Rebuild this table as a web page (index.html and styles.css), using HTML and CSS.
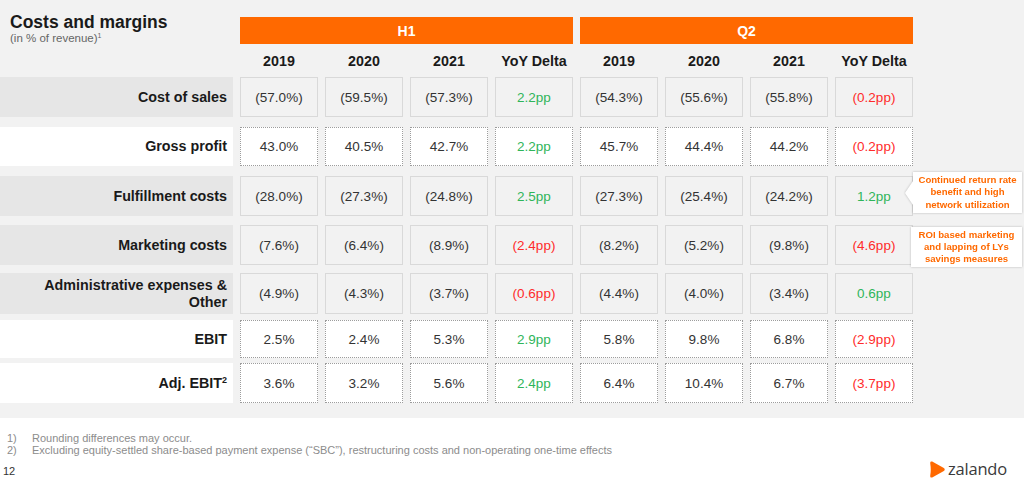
FILE: index.html
```html
<!DOCTYPE html>
<html lang="en">
<head>
<meta charset="utf-8">
<title>Costs and margins</title>
<link rel="stylesheet" href="styles.css">
</head>
<body>
<div class="slide">
  <div class="grid head">
    <div class="title-block">
      <div class="title">Costs and margins</div>
      <div class="subtitle">(in % of revenue)<sup>1</sup></div>
    </div>
    <div class="period p-h1">H1</div>
    <div class="period p-q2">Q2</div>
    <div class="year">2019</div>
    <div class="year">2020</div>
    <div class="year">2021</div>
    <div class="year">YoY Delta</div>
    <div class="year">2019</div>
    <div class="year">2020</div>
    <div class="year">2021</div>
    <div class="year">YoY Delta</div>
  </div>

  <div class="rows">
    <div class="grid row shaded">
      <div class="label"><span>Cost of sales</span></div>
      <div class="cell">(57.0%)</div><div class="cell">(59.5%)</div><div class="cell">(57.3%)</div><div class="cell pos">2.2pp</div>
      <div class="cell">(54.3%)</div><div class="cell">(55.6%)</div><div class="cell">(55.8%)</div><div class="cell neg">(0.2pp)</div>
    </div>
    <div class="grid row plain h39">
      <div class="label"><span>Gross profit</span></div>
      <div class="cell">43.0%</div><div class="cell">40.5%</div><div class="cell">42.7%</div><div class="cell pos">2.2pp</div>
      <div class="cell">45.7%</div><div class="cell">44.4%</div><div class="cell">44.2%</div><div class="cell neg">(0.2pp)</div>
    </div>
    <div class="grid row shaded">
      <div class="label"><span>Fulfillment costs</span></div>
      <div class="cell">(28.0%)</div><div class="cell">(27.3%)</div><div class="cell">(24.8%)</div><div class="cell pos">2.5pp</div>
      <div class="cell">(27.3%)</div><div class="cell">(25.4%)</div><div class="cell">(24.2%)</div><div class="cell pos">1.2pp</div>
      <div class="callout arrow"><div class="callout-box">Continued return rate benefit and high network utilization</div></div>
    </div>
    <div class="grid row shaded mt9">
      <div class="label"><span>Marketing costs</span></div>
      <div class="cell">(7.6%)</div><div class="cell">(6.4%)</div><div class="cell">(8.9%)</div><div class="cell neg">(2.4pp)</div>
      <div class="cell">(8.2%)</div><div class="cell">(5.2%)</div><div class="cell">(9.8%)</div><div class="cell neg">(4.6pp)</div>
      <div class="callout flat"><div class="callout-box">ROI based marketing and lapping of LYs savings measures</div></div>
    </div>
    <div class="grid row shaded mt8 h41">
      <div class="label"><span>Administrative expenses &amp;<br>Other</span></div>
      <div class="cell">(4.9%)</div><div class="cell">(4.3%)</div><div class="cell">(3.7%)</div><div class="cell neg">(0.6pp)</div>
      <div class="cell">(4.4%)</div><div class="cell">(4.0%)</div><div class="cell">(3.4%)</div><div class="cell pos">0.6pp</div>
    </div>
    <div class="grid row plain mt6 h38">
      <div class="label"><span>EBIT</span></div>
      <div class="cell">2.5%</div><div class="cell">2.4%</div><div class="cell">5.3%</div><div class="cell pos">2.9pp</div>
      <div class="cell">5.8%</div><div class="cell">9.8%</div><div class="cell">6.8%</div><div class="cell neg">(2.9pp)</div>
    </div>
    <div class="grid row plain mt5">
      <div class="label"><span>Adj. EBIT<sup>2</sup></span></div>
      <div class="cell">3.6%</div><div class="cell">3.2%</div><div class="cell">5.6%</div><div class="cell pos">2.4pp</div>
      <div class="cell">6.4%</div><div class="cell">10.4%</div><div class="cell">6.7%</div><div class="cell neg">(3.7pp)</div>
    </div>
  </div>
</div>

<footer class="footer">
  <ol class="notes">
    <li><span class="num">1)</span>Rounding differences may occur.</li>
    <li><span class="num">2)</span>Excluding equity-settled share-based payment expense (“SBC”), restructuring costs and non-operating one-time effects</li>
  </ol>
  <div class="foot-bar">
    <span class="page">12</span>
    <span class="logo">
      <svg class="logo-mark" width="15" height="17" viewBox="0 0 15 17" aria-hidden="true">
        <path d="M2.2 0.6 C0.6 0 0 1 0.3 3 C0.9 6.5 0.9 10.5 0.3 14 C0 16 0.6 17 2.2 16.4 L13.4 10.2 C15.2 9.2 15.2 7.8 13.4 6.8 Z" fill="#ff6900"/>
      </svg>
      <span class="logo-text">zalando</span>
    </span>
  </div>
</footer>
</body>
</html>
```

FILE: styles.css
```css
* { box-sizing: border-box; }

html, body {
  margin: 0;
  padding: 0;
  background: #ffffff;
  font-family: "Liberation Sans", Arial, sans-serif;
  color: #1a1a1a;
}

.slide {
  background: #f2f2f2;
  height: 418px;
}

.grid {
  display: grid;
  grid-template-columns: 233px repeat(8, 78px);
  column-gap: 7px;
}

/* ---------- header ---------- */
.head {
  grid-template-rows: 32px 33px;
  padding-top: 12px;
}

.title-block {
  grid-column: 1;
  grid-row: 1 / span 2;
  padding-left: 10px;
}

.title {
  font-size: 17.5px;
  font-weight: bold;
  line-height: 20px;
  color: #1a1a1a;
}

.subtitle {
  font-size: 11.5px;
  line-height: 13px;
  color: #666666;
}

.subtitle sup {
  font-size: 7px;
  vertical-align: 4px;
  line-height: 0;
}

.period {
  grid-row: 1;
  align-self: end;
  height: 27px;
  background: #ff6900;
  color: #ffffff;
  font-weight: bold;
  font-size: 14px;
  display: flex;
  align-items: center;
  justify-content: center;
}

.p-h1 { grid-column: 2 / span 4; }
.p-q2 { grid-column: 6 / span 4; }

.year {
  display: flex;
  align-items: center;
  justify-content: center;
  font-weight: bold;
  font-size: 14.3px;
  color: #1a1a1a;
}

/* ---------- rows ---------- */
.row {
  position: relative;
  height: 40px;
  margin-top: 10px;
}

.row:first-child { margin-top: 0; }
.row.mt9 { margin-top: 9px; }
.row.mt8 { margin-top: 8px; }
.row.mt6 { margin-top: 6px; }
.row.mt5 { margin-top: 5px; }
.row.h39 { height: 39px; }
.row.h41 { height: 41px; }
.row.h38 { height: 38px; }

.label {
  display: flex;
  align-items: center;
  justify-content: flex-end;
  text-align: right;
  padding-right: 6px;
  font-weight: bold;
  font-size: 14.3px;
  line-height: 16.5px;
  color: #1a1a1a;
}

.label sup {
  font-size: 9px;
  vertical-align: 5px;
  line-height: 0;
}

.cell {
  display: flex;
  align-items: center;
  justify-content: center;
  font-size: 13.5px;
  color: #333333;
}

.shaded .label { background: #e6e6e6; }
.shaded .cell {
  background: #f2f2f2;
  border: 1px solid #d9d9d9;
}

.plain .label { background: #ffffff; }
.plain .cell {
  background: #ffffff;
  border: 1px dotted #9c9c9c;
}

.cell.pos { color: #2fb55a; }
.cell.neg { color: #ff2b2b; }

/* ---------- callouts ---------- */
.callout {
  position: absolute;
  filter: drop-shadow(0 0 1px rgba(0, 0, 0, 0.25));
}

.callout.arrow {
  left: 905px;
  top: -4px;
  width: 117px;
  height: 41px;
}

.callout.flat {
  left: 911px;
  top: 2px;
  width: 111px;
  height: 40px;
}

.callout-box {
  width: 100%;
  height: 100%;
  background: #ffffff;
  color: #ff6900;
  font-weight: bold;
  font-size: 9.6px;
  line-height: 12.2px;
  text-align: center;
  display: flex;
  align-items: center;
  justify-content: center;
}

.callout.arrow .callout-box {
  padding-left: 8px;
  clip-path: polygon(8px 0, 100% 0, 100% 100%, 8px 100%, 8px 33px, 0 21px, 8px 9px);
}

/* ---------- footer ---------- */
.footer {
  padding-top: 15px;
}

.notes {
  list-style: none;
  margin: 0;
  padding: 0 0 0 7px;
  font-size: 11px;
  line-height: 11.5px;
  color: #8c8c8c;
}

.num {
  display: inline-block;
  width: 25px;
}

.foot-bar {
  display: flex;
  justify-content: space-between;
  align-items: center;
  margin-top: 4px;
  padding: 0 17px 0 3px;
}

.page {
  font-size: 11px;
  color: #333333;
  line-height: 12px;
  margin-top: 3px;
}

.logo {
  display: flex;
  align-items: center;
  gap: 3px;
}

.logo-mark { display: block; }

.logo-text {
  font-family: "Open Sans", "Liberation Sans", sans-serif;
  font-size: 16.5px;
  line-height: 18px;
  color: #3a3a3a;
  letter-spacing: -0.2px;
}
```
